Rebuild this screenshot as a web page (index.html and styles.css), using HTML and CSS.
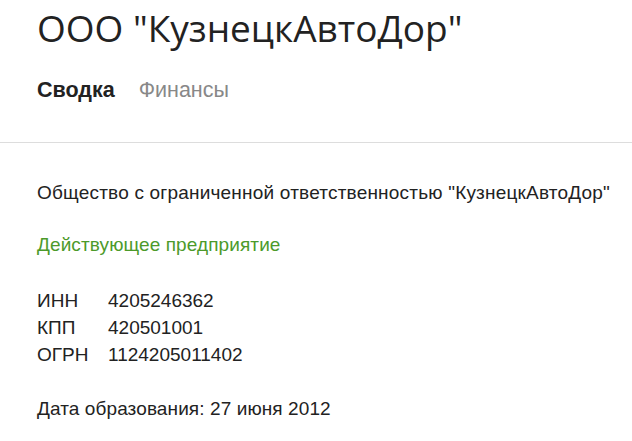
FILE: index.html
```html
<!DOCTYPE html>
<html lang="ru">
<head>
  <meta charset="UTF-8" />
  <title>ООО "КузнецкАвтоДор"</title>
  <link rel="stylesheet" href="styles.css">
</head>
<body>

  <header class="company-header">
    <h1>ООО "КузнецкАвтоДор"</h1>
    <nav class="tabs">
      <a href="#" class="active">Сводка</a>
      <a href="#">Финансы</a>
    </nav>
  </header>

  <main class="summary">
    <p class="full-name">Общество с ограниченной ответственностью "КузнецкАвтоДор"</p>
    <p class="status">Действующее предприятие</p>

    <table class="codes">
      <tr><td>ИНН</td><td>4205246362</td></tr>
      <tr><td>КПП</td><td>420501001</td></tr>
      <tr><td>ОГРН</td><td>1124205011402</td></tr>
    </table>

    <p class="founded">Дата образования: 27 июня 2012</p>
  </main>

</body>
</html>
```

FILE: styles.css
```css
* {
  box-sizing: border-box;
}

body {
  margin: 0;
  font-family: 'Liberation Sans', Arial, sans-serif;
  color: #222;
  background: #fff;
}

.company-header {
  padding: 6px 37px 0;
  border-bottom: 1px solid #ddd;
  height: 143px;
}

.company-header h1 {
  margin: 0;
  font-family: 'Open Sans', sans-serif;
  font-weight: 400;
  font-size: 37px;
  line-height: 44px;
  color: #222;
}

.tabs {
  display: flex;
  gap: 24px;
  margin-top: 28px;
}

.tabs a {
  font-size: 21.5px;
  line-height: 24px;
  text-decoration: none;
  color: #888;
}

.tabs a.active {
  font-weight: bold;
  color: #222;
}

.summary {
  padding: 0 0 0 37px;
  font-size: 19px;
  line-height: 22px;
  white-space: nowrap;
}

.summary p {
  margin: 0;
}

.summary .full-name {
  margin-top: 39px;
  letter-spacing: 0.2px;
}

.summary .status {
  margin-top: 30px;
  color: #4c9a2a;
  letter-spacing: 0.1px;
}

.codes {
  margin-top: 31px;
  border-collapse: collapse;
  font-size: 19px;
}

.codes td {
  padding: 0;
  height: 27px;
}

.codes td:first-child {
  width: 71px;
}

.summary .founded {
  margin-top: 30px;
  letter-spacing: 0.1px;
}
```
